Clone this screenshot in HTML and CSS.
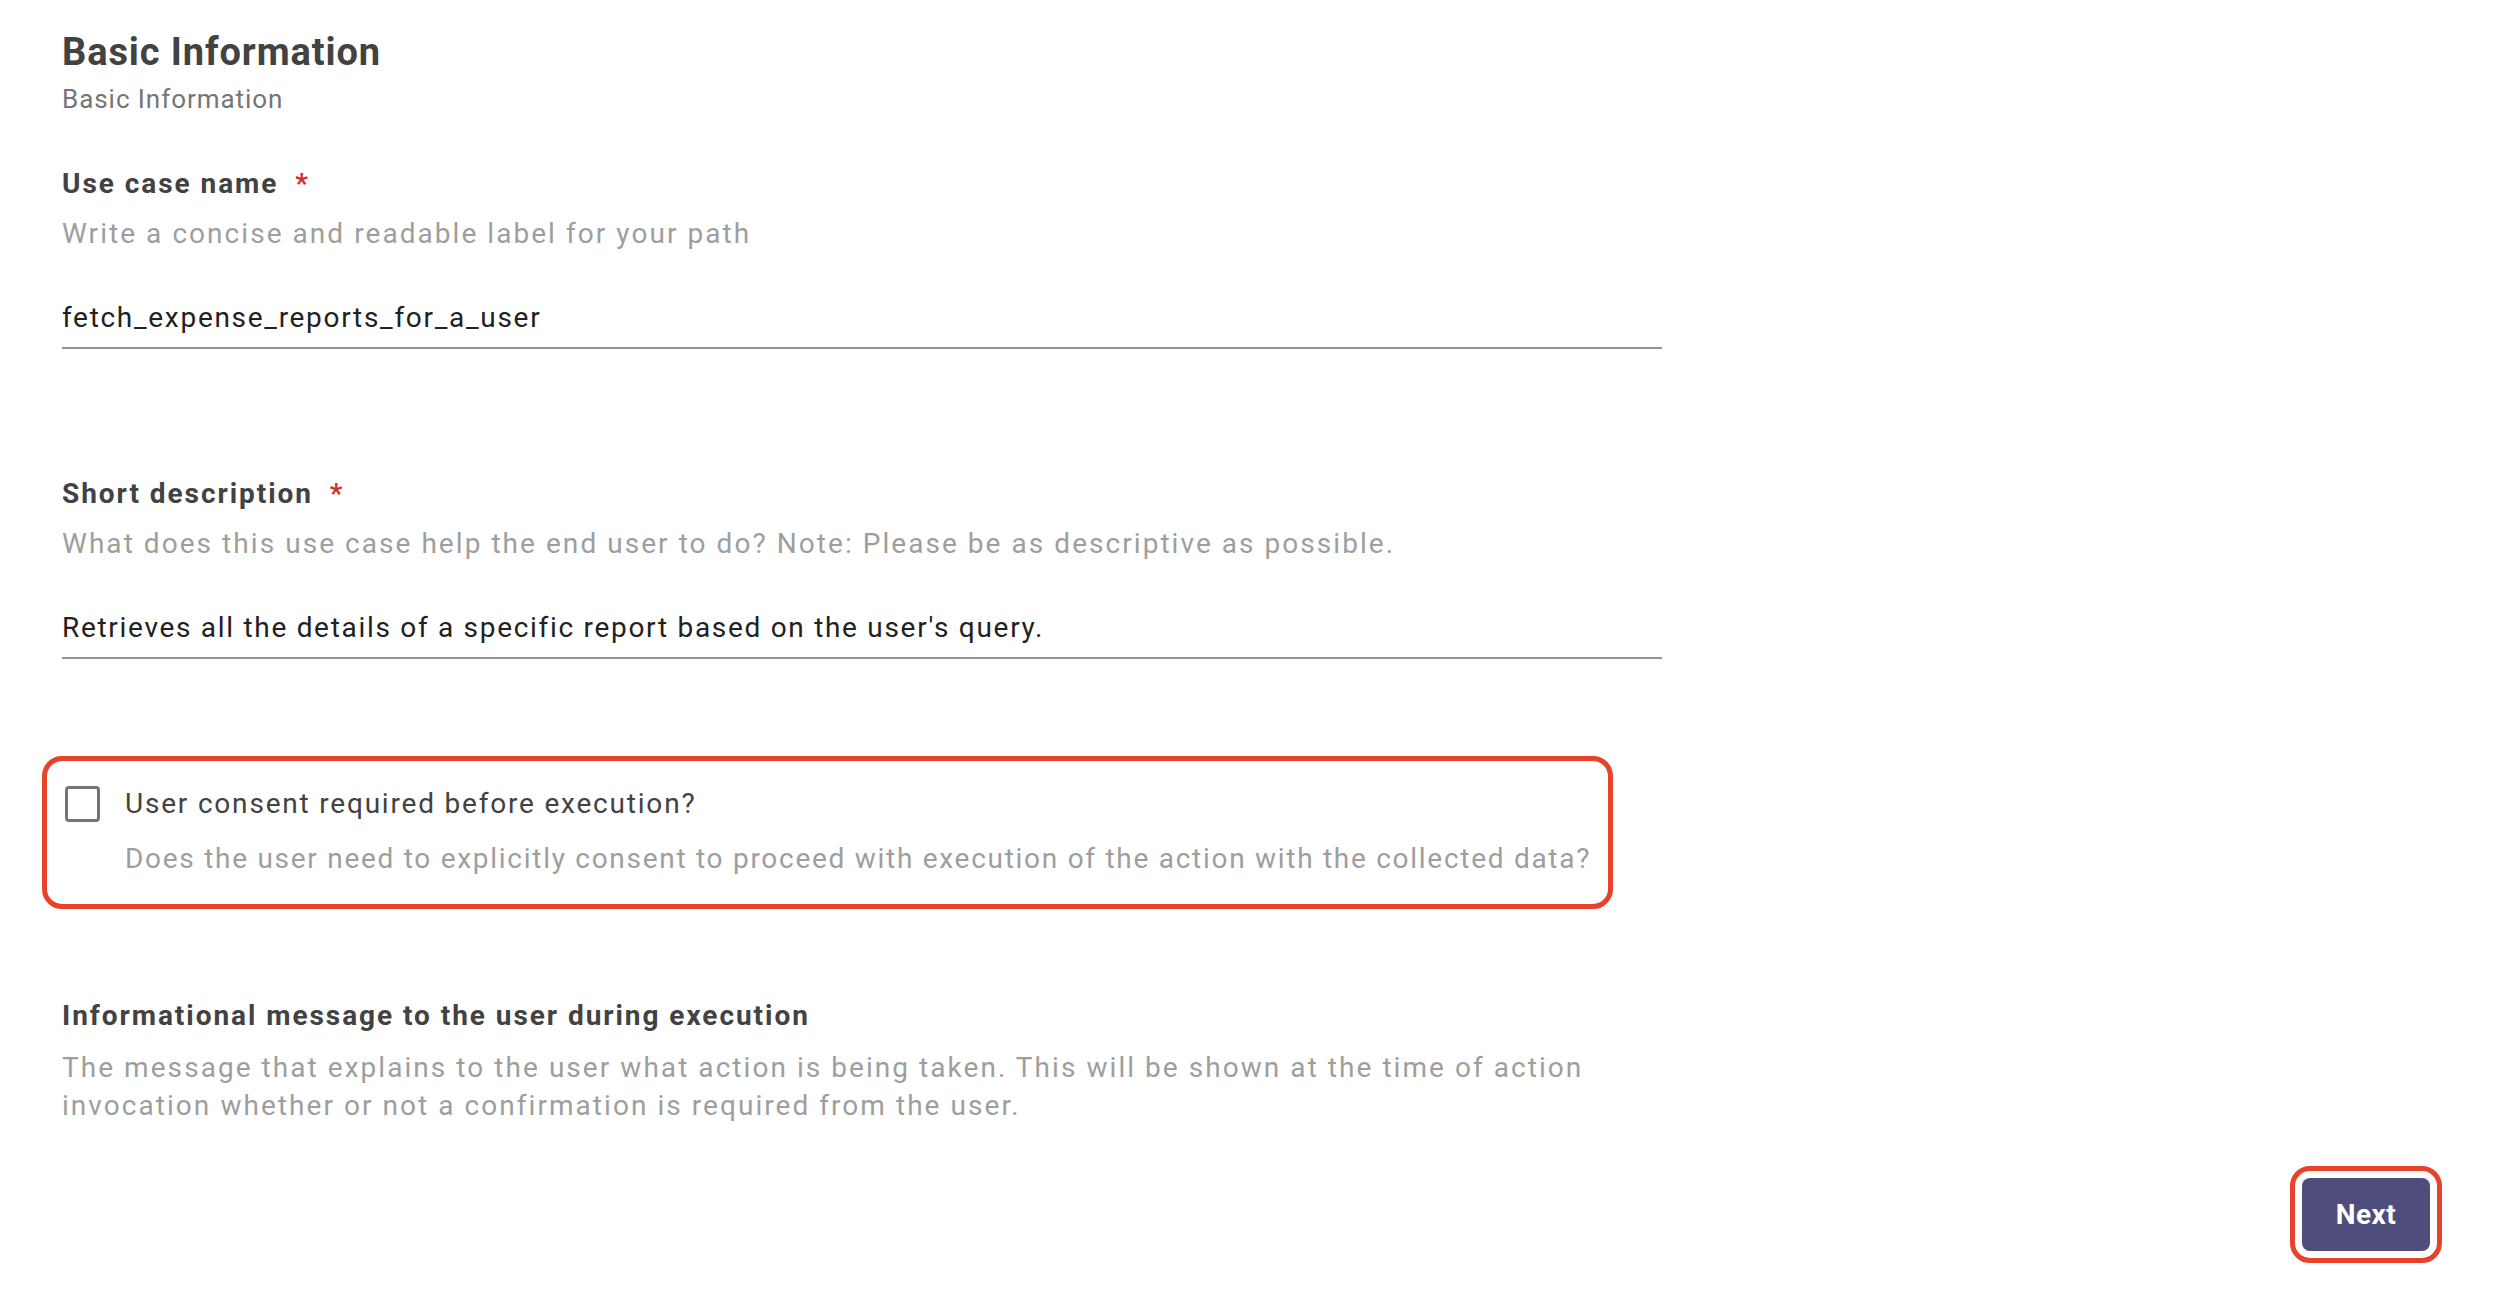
FILE: index.html
```html
<!DOCTYPE html>
<html lang="en">
<head>
<meta charset="utf-8">
<title>Basic Information</title>
<link rel="stylesheet" href="styles.css">
</head>
<body>
<main class="page">
  <div class="form">
    <header class="section-head">
      <h1 class="title">Basic Information</h1>
      <p class="subtitle">Basic Information</p>
    </header>

    <div class="field field-first">
      <div class="field-label">Use case name <span class="req">*</span></div>
      <p class="field-hint">Write a concise and readable label for your path</p>
      <div class="field-input">fetch_expense_reports_for_a_user</div>
    </div>

    <div class="field field-next">
      <div class="field-label">Short description <span class="req">*</span></div>
      <p class="field-hint">What does this use case help the end user to do? Note: Please be as descriptive as possible.</p>
      <div class="field-input">Retrieves all the details of a specific report based on the user's query.</div>
    </div>

    <div class="consent annot">
      <div class="consent-row">
        <span class="checkbox"></span>
        <span class="consent-label">User consent required before execution?</span>
      </div>
      <p class="consent-hint">Does the user need to explicitly consent to proceed with execution of the action with the collected data?</p>
    </div>

    <div class="field field-info">
      <div class="field-label">Informational message to the user during execution</div>
      <p class="field-hint info-hint">The message that explains to the user what action is being taken. This will be shown at the time of action invocation whether or not a confirmation is required from the user.</p>
    </div>
  </div>

  <div class="footer">
    <span class="annot-ring"><button class="btn-next" type="button">Next</button></span>
  </div>
</main>
</body>
</html>
```

FILE: styles.css
```css
* { box-sizing: border-box; }

html, body {
  margin: 0;
  padding: 0;
  background: #ffffff;
}

body {
  font-family: Roboto, "Noto Sans", "Liberation Sans", sans-serif;
  color: #424242;
}

.page {
  padding: 30px 56px 0 62px;
}

.form {
  width: 1600px;
}

.title {
  margin: 0;
  font-size: 38px;
  line-height: 44px;
  font-weight: 700;
  letter-spacing: 0.9px;
  color: #424242;
}

.subtitle {
  margin: 9px 0 0;
  font-size: 26px;
  line-height: 32px;
  letter-spacing: 0.95px;
  color: #757575;
}

.field-first { margin-top: 51px; }
.field-next { margin-top: 127px; }
.field-info { margin-top: 89px; }

.field-label {
  font-size: 28px;
  line-height: 36px;
  font-weight: 700;
  letter-spacing: 1.95px;
  color: #424242;
}

.req {
  color: #d32f2f;
  margin-left: 8px;
}

.field-hint {
  margin: 14px 0 0;
  font-size: 28px;
  line-height: 36px;
  letter-spacing: 2.05px;
  color: #9e9e9e;
}

.info-hint {
  margin-top: 15px;
  line-height: 38px;
  letter-spacing: 2.05px;
}

.field-input {
  margin-top: 48px;
  font-size: 28px;
  line-height: 36px;
  letter-spacing: 1.7px;
  color: #212121;
  padding-bottom: 11px;
  border-bottom: 2px solid #949494;
}

.annot {
  border: 5px solid #e8432a;
  border-radius: 20px;
}

.consent {
  margin: 97px 49px 0 -20px;
  padding: 25px 8px 27px 18px;
}

.consent-row {
  display: flex;
  align-items: flex-start;
  gap: 25px;
}

.checkbox {
  flex: none;
  width: 35px;
  height: 36px;
  border: 3px solid #757575;
  border-radius: 4px;
}

.consent-label {
  font-size: 28px;
  line-height: 36px;
  letter-spacing: 1.8px;
  color: #424242;
}

.consent-hint {
  margin: 19px 0 0 60px;
  font-size: 28px;
  line-height: 36px;
  letter-spacing: 1.72px;
  white-space: nowrap;
  color: #9e9e9e;
}

.footer {
  display: flex;
  justify-content: flex-end;
  margin-top: 41px;
}

.annot-ring {
  display: inline-flex;
  padding: 7px;
  border: 5px solid #e8432a;
  border-radius: 20px;
}

.btn-next {
  width: 128px;
  height: 73px;
  border: none;
  border-radius: 8px;
  background: #4e4d7b;
  color: #ffffff;
  font-family: Roboto, "Noto Sans", "Liberation Sans", sans-serif;
  font-size: 28px;
  font-weight: 700;
  letter-spacing: 0.5px;
  padding: 0;
  cursor: pointer;
}
```
